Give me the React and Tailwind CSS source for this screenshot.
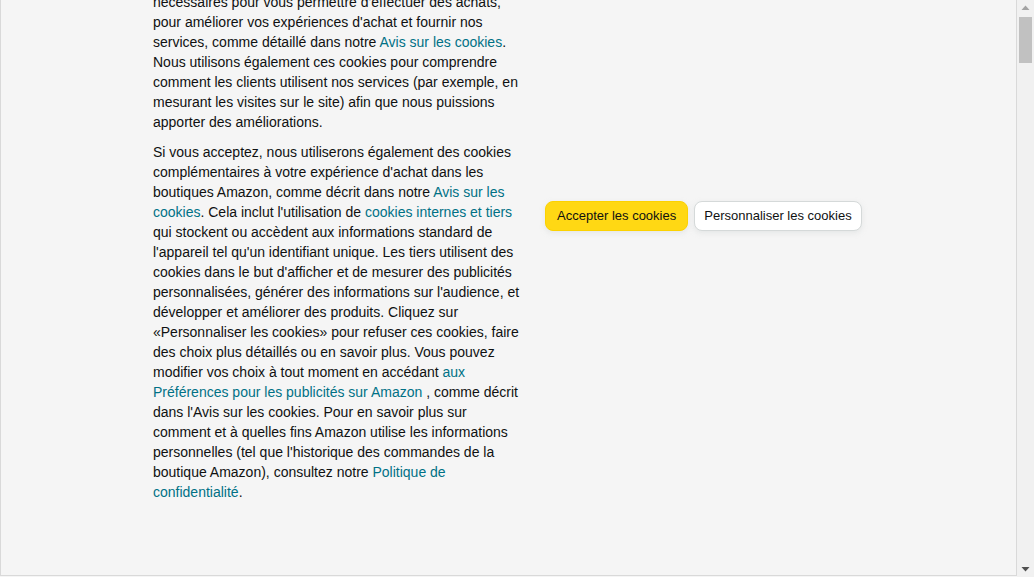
export default function App() {
  const link = "text-[#007185]";
  return (
    <div className="flex h-[577px] w-[1034px] overflow-hidden bg-[#f5f5f5] text-[#0f1111]" style={{ fontFamily: '"Liberation Sans", Arial, sans-serif' }}>
      <div className="h-[576px] w-[1017px] shrink-0 overflow-hidden border-x border-b border-[#d9d9d9] bg-[#f5f5f5]">
        <div className="flex items-start pl-[152px]">
          <div className="-mt-[8px] w-[370px] text-[14px] leading-[20px]">
            <p>
              nécessaires pour vous permettre d'effectuer des achats,<br />
              pour améliorer vos expériences d'achat et fournir nos services, comme détaillé dans notre <span className={link}>Avis sur les cookies</span>. Nous utilisons également ces cookies pour comprendre comment les clients utilisent nos services (par exemple, en mesurant les visites sur le site) afin que nous puissions apporter des améliorations.
            </p>
            <p className="mt-[10px]">
              Si vous acceptez, nous utiliserons également des cookies complémentaires à votre expérience d'achat dans les boutiques Amazon, comme décrit dans notre <span className={link}>Avis sur les cookies</span>. Cela inclut l'utilisation de <span className={link}>cookies internes et tiers</span> qui stockent ou accèdent aux informations standard de l'appareil tel qu'un identifiant unique. Les tiers utilisent des cookies dans le but d'afficher et de mesurer des publicités personnalisées, générer des informations sur l'audience, et développer et améliorer des produits. Cliquez sur «Personnaliser les cookies» pour refuser ces cookies, faire des choix plus détaillés ou en savoir plus. Vous pouvez modifier vos choix à tout moment en accédant <span className={link}>aux Préférences pour les publicités sur Amazon</span> , comme décrit dans l'Avis sur les cookies. Pour en savoir plus sur comment et à quelles fins Amazon utilise les informations personnelles (tel que l'historique des commandes de la boutique Amazon), consultez notre <span className={link}>Politique de confidentialité</span>.
            </p>
          </div>
          <div className="ml-[22px] mt-[201px] flex items-center gap-[6px]">
            <button className="h-[30px] rounded-[8px] border border-[#fcd200] bg-[#ffd814] px-[11px] text-[13px] text-[#0f1111] shadow-[0_2px_5px_rgba(213,217,217,0.5)]">
              Accepter les cookies
            </button>
            <button className="h-[30px] rounded-[8px] border border-[#d5d9d9] bg-white px-[9px] text-[13px] text-[#0f1111] shadow-[0_2px_5px_rgba(213,217,217,0.5)]">
              Personnaliser les cookies
            </button>
          </div>
        </div>
      </div>
      <div className="relative h-[577px] w-[17px] shrink-0 bg-[#f1f1f1]">
        <svg className="absolute left-[4px] top-[5px]" width="9" height="6" viewBox="0 0 9 6">
          <polygon points="4.5,0.5 8.5,5 0.5,5" fill="#a3a3a3" />
        </svg>
        <div className="absolute left-[2px] top-[17px] h-[46px] w-[13px] bg-[#c1c1c1]" />
        <svg className="absolute bottom-[5px] left-[4px]" width="9" height="6" viewBox="0 0 9 6">
          <polygon points="0.5,1 8.5,1 4.5,5.5" fill="#505050" />
        </svg>
      </div>
    </div>
  );
}
